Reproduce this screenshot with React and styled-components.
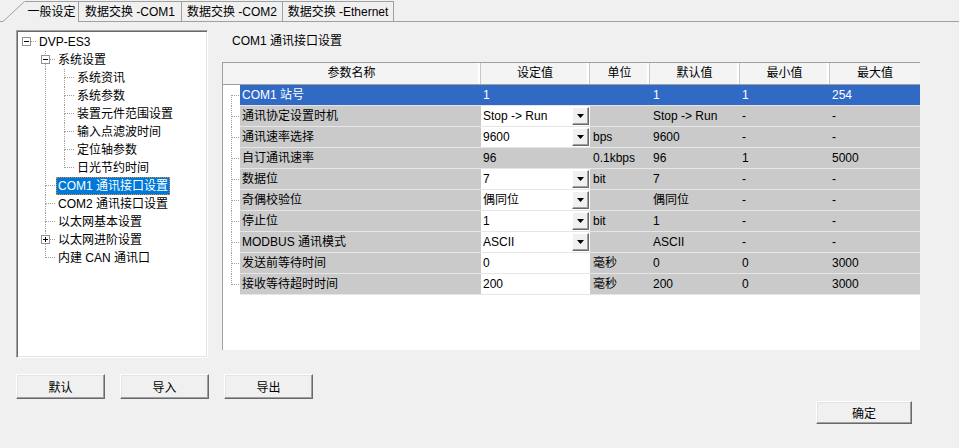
import React from "react";
import styled, { createGlobalStyle } from "styled-components";

const GlobalStyle = createGlobalStyle`
  html, body {
    margin: 0;
    padding: 0;
    background: #f0f0f0;
  }
  body {
    font-family: "Liberation Sans", "Noto Sans CJK SC", sans-serif;
    font-size: 12px;
    color: #000;
  }
  * {
    box-sizing: border-box;
  }
`;

const Window = styled.div`
  width: 959px;
  height: 448px;
  background: #f0f0f0;
  overflow: hidden;
`;

const TabBar = styled.div`
  display: flex;
  height: 22px;
`;

const TabLead = styled.div`
  width: 25px;
  height: 22px;
  flex: none;
`;

const Tab = styled.div`
  width: ${(p) => p.$width}px;
  height: 21px;
  margin-top: 1px;
  flex: none;
  display: flex;
  justify-content: center;
  padding-top: 3px;
  line-height: 15px;
  border-top: 1px solid #a0a0a0;
  border-right: 1px solid #a0a0a0;
  border-bottom: ${(p) => (p.$active ? "none" : "1px solid #a0a0a0")};
  white-space: nowrap;
`;

const TabFill = styled.div`
  flex: 1;
  border-bottom: 1px solid #a0a0a0;
`;

const Body = styled.div`
  display: flex;
  padding: 8px 0 0 16px;
`;

const TreePanel = styled.div`
  width: 192px;
  height: 328px;
  flex: none;
  background: #fff;
  border: 1px solid;
  border-color: #a0a0a0 #fff #fff #a0a0a0;
  box-shadow: inset 1px 1px 0 #696969, inset -1px -1px 0 #e3e3e3;
  padding: 2px 0 0 1px;
  display: flex;
  flex-direction: column;
`;

const TreeRow = styled.div`
  display: flex;
  height: 18px;
  align-items: center;
`;

const TreeLabel = styled.span`
  height: 18px;
  line-height: 16px;
  padding: 0 1px;
  white-space: nowrap;
  border: 1px dotted ${(p) => (p.$selected ? "#e08a2e" : "transparent")};
  background: ${(p) => (p.$selected ? "#0078d7" : "transparent")};
  color: ${(p) => (p.$selected ? "#fff" : "#000")};
`;

const RightColumn = styled.div`
  margin-left: 14px;
  width: 698px;
  display: flex;
  flex-direction: column;
`;

const Title = styled.div`
  margin-top: 4px;
  padding-left: 10px;
  line-height: 14px;
`;

const Table = styled.div`
  margin-top: 14px;
  width: 698px;
  height: 288px;
  background: #fff;
  border-top: 1px solid #a0a0a0;
  border-left: 1px solid #a0a0a0;
`;

const HeaderRow = styled.div`
  display: grid;
  grid-template-columns: 258px 109px 60px 90px 90px 90px;
  height: 22px;
  background: #f4f4f4;
  border-bottom: 1px solid #a0a0a0;
`;

const HeaderCell = styled.div`
  text-align: center;
  line-height: 21px;
  border-right: 1px solid #c8c8c8;
  box-shadow: inset -2px 0 0 #fff;
  &:last-child {
    border-right: none;
    box-shadow: none;
  }
`;

const DataRow = styled.div`
  display: grid;
  grid-template-columns: 17px 241px 109px 60px 90px 90px 90px;
  height: 21px;
`;

const Gutter = styled.div`
  height: 21px;
  background: #fff;
`;

const Cell = styled.div`
  height: 21px;
  line-height: 20px;
  padding-left: ${(p) => p.$pad ?? 3}px;
  white-space: nowrap;
  overflow: hidden;
  background: ${(p) => (p.$selected ? "#316ac5" : "#cacaca")};
  color: ${(p) => (p.$selected ? "#fff" : "#000")};
  border-bottom: 1px solid #e6e6e6;
`;

const EditorCell = styled.div`
  height: 21px;
  display: flex;
  align-items: stretch;
  background: #fff;
  border-bottom: 1px solid #e6e6e6;
`;

const EditorText = styled.span`
  flex: 1;
  padding-left: 2px;
  line-height: 20px;
  white-space: nowrap;
`;

const DropButton = styled.span`
  width: 17px;
  margin: 1px 1px 1px 0;
  display: flex;
  align-items: center;
  justify-content: center;
  background: #f0f0f0;
  border: 1px solid;
  border-color: #fff #696969 #696969 #fff;
  box-shadow: inset -1px -1px 0 #a0a0a0;
`;

const Footer = styled.div`
  display: flex;
  flex-direction: column;
  padding-top: 16px;
`;

const ButtonRow = styled.div`
  display: flex;
  gap: 15px;
  padding-left: 16px;
`;

const ConfirmRow = styled.div`
  display: flex;
  justify-content: flex-end;
  padding-right: 47px;
  margin-top: 2px;
`;

const Button = styled.button`
  width: ${(p) => p.$width}px;
  height: ${(p) => p.$height}px;
  padding: 0;
  font: inherit;
  color: #000;
  background: #f0f0f0;
  border: 1px solid;
  border-color: #fff #696969 #696969 #fff;
  box-shadow: inset -1px -1px 0 #a0a0a0, inset 1px 1px 0 #e3e3e3;
  cursor: pointer;
`;

const dots = { stroke: "#a0a0a0", strokeDasharray: "1 1", shapeRendering: "crispEdges" };

// ancestor column: a continuing vertical line, or nothing
function TreeGuide({ line }) {
  return (
    <svg width="19" height="18" viewBox="0 0 19 18" style={{ flex: "none" }}>
      {line && <line x1="8.5" y1="0" x2="8.5" y2="18" {...dots} />}
    </svg>
  );
}

// the node's own column: connector lines and the expand box
function TreeNode({ up, down, box }) {
  return (
    <svg width="19" height="18" viewBox="0 0 19 18" style={{ flex: "none" }}>
      <g {...dots}>
        {up && <line x1="8.5" y1="0" x2="8.5" y2="9" />}
        {down && <line x1="8.5" y1="9" x2="8.5" y2="18" />}
        <line x1="9" y1="8.5" x2="19" y2="8.5" />
      </g>
      {box && (
        <g shapeRendering="crispEdges">
          <rect x="4.5" y="4.5" width="8" height="8" fill="#fff" stroke="#919191" />
          <line x1="6" y1="8.5" x2="11" y2="8.5" stroke="#000" />
          {box === "plus" && <line x1="8.5" y1="6" x2="8.5" y2="11" stroke="#000" />}
        </g>
      )}
    </svg>
  );
}

function GutterLines({ first, last }) {
  return (
    <svg width="17" height="21" viewBox="0 0 17 21">
      <g {...dots}>
        <line x1="8.5" y1={first ? 10 : 0} x2="8.5" y2={last ? 11 : 21} />
        <line x1="9" y1="10.5" x2="17" y2="10.5" />
      </g>
    </svg>
  );
}

function Arrow() {
  return (
    <svg width="7" height="4" viewBox="0 0 7 4">
      <polygon points="0,0 7,0 3.5,4" fill="#000" />
    </svg>
  );
}

const tabs = [
  { label: "一般设定", width: 54, active: true },
  { label: "数据交换 -COM1", width: 103 },
  { label: "数据交换 -COM2", width: 101 },
  { label: "数据交换 -Ethernet", width: 111 },
];

const tree = [
  { label: "DVP-ES3", guides: [], box: "minus" },
  { label: "系统设置", guides: [false], box: "minus", up: true, down: true },
  { label: "系统资讯", guides: [false, true], up: true, down: true },
  { label: "系统参数", guides: [false, true], up: true, down: true },
  { label: "装置元件范围设置", guides: [false, true], up: true, down: true },
  { label: "输入点滤波时间", guides: [false, true], up: true, down: true },
  { label: "定位轴参数", guides: [false, true], up: true, down: true },
  { label: "日光节约时间", guides: [false, true], up: true },
  { label: "COM1 通讯接口设置", guides: [false], up: true, down: true, selected: true },
  { label: "COM2 通讯接口设置", guides: [false], up: true, down: true },
  { label: "以太网基本设置", guides: [false], up: true, down: true },
  { label: "以太网进阶设置", guides: [false], box: "plus", up: true, down: true },
  { label: "内建 CAN 通讯口", guides: [false], up: true },
];

const headers = ["参数名称", "设定值", "单位", "默认值", "最小值", "最大值"];

const params = [
  { name: "COM1 站号", value: "1", unit: "", def: "1", min: "1", max: "254", kind: "text", selected: true },
  { name: "通讯协定设置时机", value: "Stop -> Run", unit: "", def: "Stop -> Run", min: "-", max: "-", kind: "combo" },
  { name: "通讯速率选择", value: "9600", unit: "bps", def: "9600", min: "-", max: "-", kind: "combo" },
  { name: "自订通讯速率", value: "96", unit: "0.1kbps", def: "96", min: "1", max: "5000", kind: "text" },
  { name: "数据位", value: "7", unit: "bit", def: "7", min: "-", max: "-", kind: "combo" },
  { name: "奇偶校验位", value: "偶同位", unit: "", def: "偶同位", min: "-", max: "-", kind: "combo" },
  { name: "停止位", value: "1", unit: "bit", def: "1", min: "-", max: "-", kind: "combo" },
  { name: "MODBUS 通讯模式", value: "ASCII", unit: "", def: "ASCII", min: "-", max: "-", kind: "combo" },
  { name: "发送前等待时间", value: "0", unit: "毫秒", def: "0", min: "0", max: "3000", kind: "input" },
  { name: "接收等待超时时间", value: "200", unit: "毫秒", def: "200", min: "0", max: "3000", kind: "input" },
];

export default function App() {
  return (
    <Window>
      <GlobalStyle />
      <TabBar>
        <TabLead>
          <svg width="25" height="22" viewBox="0 0 25 22">
            <polyline points="0,21.5 3,21.5 24.5,1.5" fill="none" stroke="#a0a0a0" />
          </svg>
        </TabLead>
        {tabs.map((t) => (
          <Tab key={t.label} $width={t.width} $active={t.active}>
            {t.label}
          </Tab>
        ))}
        <TabFill />
      </TabBar>

      <Body>
        <TreePanel>
          {tree.map((n) => (
            <TreeRow key={n.label}>
              {n.guides.map((g, i) => (
                <TreeGuide key={i} line={g} />
              ))}
              <TreeNode up={n.up} down={n.down} box={n.box} />
              <TreeLabel $selected={n.selected}>{n.label}</TreeLabel>
            </TreeRow>
          ))}
        </TreePanel>

        <RightColumn>
          <Title>COM1 通讯接口设置</Title>
          <Table>
            <HeaderRow>
              {headers.map((h) => (
                <HeaderCell key={h}>{h}</HeaderCell>
              ))}
            </HeaderRow>
            {params.map((r, i) => (
              <DataRow key={r.name}>
                <Gutter>
                  <GutterLines first={i === 0} last={i === params.length - 1} />
                </Gutter>
                <Cell $selected={r.selected} $pad={2}>
                  {r.name}
                </Cell>
                {r.kind === "text" ? (
                  <Cell $selected={r.selected} $pad={2}>
                    {r.value}
                  </Cell>
                ) : (
                  <EditorCell>
                    <EditorText>{r.value}</EditorText>
                    {r.kind === "combo" && (
                      <DropButton>
                        <Arrow />
                      </DropButton>
                    )}
                  </EditorCell>
                )}
                <Cell $selected={r.selected}>{r.unit}</Cell>
                <Cell $selected={r.selected}>{r.def}</Cell>
                <Cell $selected={r.selected} $pad={2}>
                  {r.min}
                </Cell>
                <Cell $selected={r.selected} $pad={2}>
                  {r.max}
                </Cell>
              </DataRow>
            ))}
          </Table>
        </RightColumn>
      </Body>

      <Footer>
        <ButtonRow>
          <Button $width={89} $height={25}>默认</Button>
          <Button $width={89} $height={25}>导入</Button>
          <Button $width={89} $height={25}>导出</Button>
        </ButtonRow>
        <ConfirmRow>
          <Button $width={96} $height={23}>确定</Button>
        </ConfirmRow>
      </Footer>
    </Window>
  );
}
